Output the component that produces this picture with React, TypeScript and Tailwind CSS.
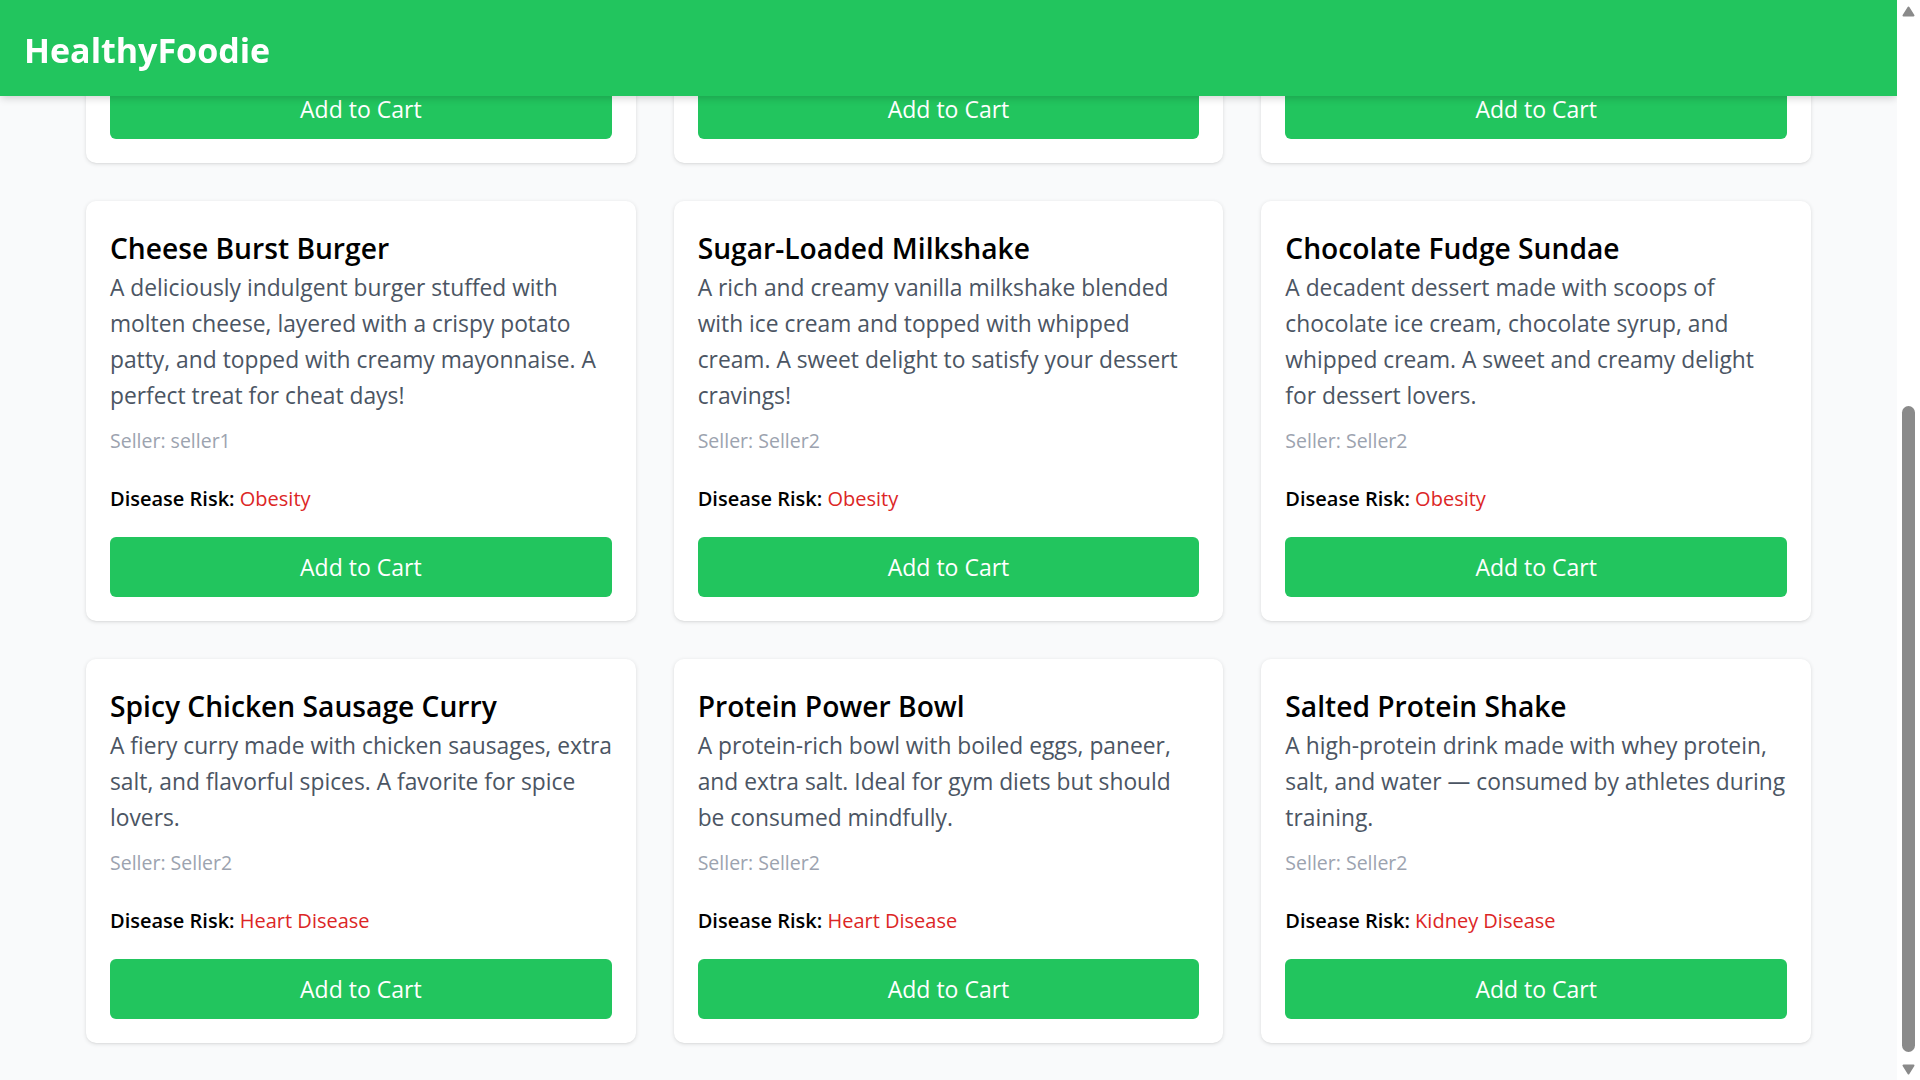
import { useLayoutEffect, useRef } from "react";

type Product = {
  name: string;
  lines: string[];
  seller: string;
  risk: string;
};

const products: Product[] = [
  {
    name: "Grilled Chicken Salad",
    lines: [
      "A light and refreshing salad topped with",
      "grilled chicken breast, cherry tomatoes,",
      "cucumbers, and a tangy lemon dressing.",
      "Perfect for a healthy lunch!",
    ],
    seller: "seller1",
    risk: "None",
  },
  {
    name: "Quinoa Veggie Bowl",
    lines: [
      "A wholesome bowl of quinoa, roasted",
      "vegetables, chickpeas and fresh greens,",
      "finished with a drizzle of olive oil. Packed",
      "with fibre and plant protein.",
    ],
    seller: "Seller2",
    risk: "None",
  },
  {
    name: "Berry Oat Smoothie",
    lines: [
      "A creamy blend of mixed berries, rolled oats,",
      "banana and low-fat yogurt. A nourishing",
      "start to the day that keeps you full for",
      "hours.",
    ],
    seller: "Seller2",
    risk: "None",
  },
  {
    name: "Cheese Burst Burger",
    lines: [
      "A deliciously indulgent burger stuffed with",
      "molten cheese, layered with a crispy potato",
      "patty, and topped with creamy mayonnaise. A",
      "perfect treat for cheat days!",
    ],
    seller: "seller1",
    risk: "Obesity",
  },
  {
    name: "Sugar-Loaded Milkshake",
    lines: [
      "A rich and creamy vanilla milkshake blended",
      "with ice cream and topped with whipped",
      "cream. A sweet delight to satisfy your dessert",
      "cravings!",
    ],
    seller: "Seller2",
    risk: "Obesity",
  },
  {
    name: "Chocolate Fudge Sundae",
    lines: [
      "A decadent dessert made with scoops of",
      "chocolate ice cream, chocolate syrup, and",
      "whipped cream. A sweet and creamy delight",
      "for dessert lovers.",
    ],
    seller: "Seller2",
    risk: "Obesity",
  },
  {
    name: "Spicy Chicken Sausage Curry",
    lines: [
      "A fiery curry made with chicken sausages, extra",
      "salt, and flavorful spices. A favorite for spice",
      "lovers.",
    ],
    seller: "Seller2",
    risk: "Heart Disease",
  },
  {
    name: "Protein Power Bowl",
    lines: [
      "A protein-rich bowl with boiled eggs, paneer,",
      "and extra salt. Ideal for gym diets but should",
      "be consumed mindfully.",
    ],
    seller: "Seller2",
    risk: "Heart Disease",
  },
  {
    name: "Salted Protein Shake",
    lines: [
      "A high-protein drink made with whey protein,",
      "salt, and water \u2014 consumed by athletes during",
      "training.",
    ],
    seller: "Seller2",
    risk: "Kidney Disease",
  },
];

function ProductCard({ product }: { product: Product }) {
  return (
    <div className="flex flex-col rounded-[10px] bg-white p-6 shadow-[0_1px_4px_0_rgba(0,0,0,0.12),0_1px_2px_-1px_rgba(0,0,0,0.1)]">
      <h2 className="pt-[1px] text-[28.2px] leading-[44px] font-semibold text-black">
        {product.name}
      </h2>
      <p className="text-[22.8px] leading-[36px] text-[#4b5563]">
        {product.lines.map((line) => (
          <span key={line} className="block whitespace-nowrap">
            {line}
          </span>
        ))}
      </p>
      <p className="mt-[14px] text-[19.5px] leading-[25px] text-[#9ca3af]">
        Seller: {product.seller}
      </p>
      <p className="mt-[31px] text-[20px] leading-[30px] text-black">
        <span className="font-semibold">Disease Risk:</span>{" "}
        <span className="text-[#dc2626]">{product.risk}</span>
      </p>
      <div className="mt-auto pt-[23px]">
        <button className="flex h-[60px] w-full items-center justify-center rounded-[6px] bg-[#22c55e] text-[23px] text-white">
          Add to Cart
        </button>
      </div>
    </div>
  );
}

function Arrow({ down }: { down?: boolean }) {
  return (
    <div className="flex h-[22px] items-center justify-center">
      <svg width="13" height="11" viewBox="0 0 13 11">
        <path
          d={down ? "M1.5 1.5 L11.5 1.5 L6.5 9.5 Z" : "M6.5 1.5 L11.5 9.5 L1.5 9.5 Z"}
          fill="#8a8a8a"
          stroke="#8a8a8a"
          strokeWidth="2"
          strokeLinejoin="round"
        />
      </svg>
    </div>
  );
}

function ScrollRail() {
  return (
    <div className="flex h-full w-[23px] shrink-0 flex-col bg-white">
      <Arrow />
      <div className="flex flex-1 justify-center">
        <div className="mt-[384px] h-[646px] w-[13px] rounded-full bg-[#8a8a8a]" />
      </div>
      <Arrow down />
    </div>
  );
}

export default function App() {
  const scrollRef = useRef<HTMLDivElement>(null);

  useLayoutEffect(() => {
    const el = scrollRef.current;
    if (!el) return;
    const toBottom = () => {
      el.scrollTop = el.scrollHeight;
    };
    toBottom();
    document.fonts?.ready.then(toBottom);
  }, []);

  return (
    <div className="flex h-screen w-full overflow-hidden bg-[#f9fafb] font-['Open_Sans',sans-serif]">
      <div
        ref={scrollRef}
        className="h-full flex-1 overflow-y-auto [scrollbar-width:none]"
      >
        <header className="sticky top-0 z-10 flex h-[96px] items-center bg-[#22c55e] px-6 pt-1 shadow-[0_3px_8px_-1px_rgba(0,0,0,0.18)]">
          <h1 className="text-[34px] font-bold text-white">HealthyFoodie</h1>
        </header>
        <main className="px-[86px] pt-[40px] pb-[37px]">
          <div className="grid grid-cols-3 gap-[38px]">
            {products.map((p) => (
              <ProductCard key={p.name} product={p} />
            ))}
          </div>
        </main>
      </div>
      <ScrollRail />
    </div>
  );
}
